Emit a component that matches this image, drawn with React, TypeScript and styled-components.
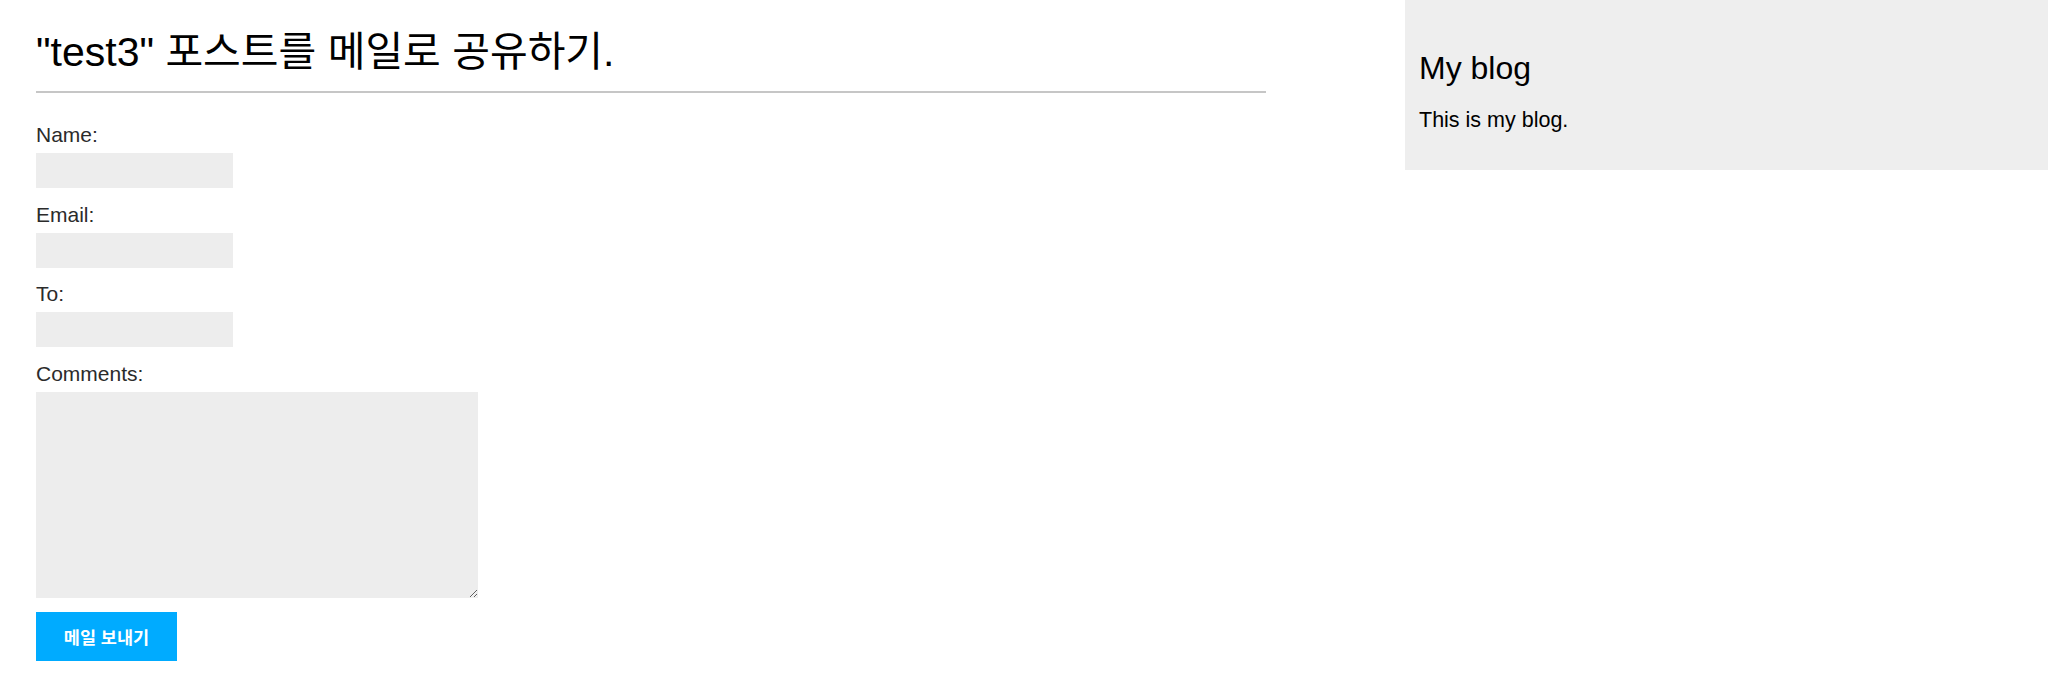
import styled, { createGlobalStyle } from "styled-components";

const GlobalStyle = createGlobalStyle`
  body {
    margin: 0;
    padding: 0;
    background: #fff;
    font-family: "Liberation Sans", "Noto Sans CJK KR", Helvetica, sans-serif;
  }
`;

const Page = styled.div`
  display: flex;
  justify-content: space-between;
  align-items: flex-start;
  width: 2048px;
`;

const Content = styled.main`
  width: 1230px;
  padding-left: 36px;
`;

const Title = styled.h1`
  margin: 27px 0 28px;
  padding-bottom: 14px;
  border-bottom: 2px solid #c6c6c6;
  font-size: 41px;
  line-height: 50px;
  font-weight: normal;
  color: #000;
`;

const Form = styled.form`
  display: flex;
  flex-direction: column;
  align-items: flex-start;
`;

const Label = styled.label`
  margin-bottom: 5px;
  font-size: 21px;
  line-height: 27px;
  color: #2b2b2b;
`;

const Input = styled.input`
  box-sizing: border-box;
  width: 197px;
  height: 35px;
  margin: 0 0 12.5px;
  padding: 7px 12px;
  border: 0;
  background: #ededed;
  font-size: 15px;
  outline: none;
`;

const TextArea = styled.textarea`
  box-sizing: border-box;
  width: 442px;
  height: 206px;
  margin: 0 0 14px;
  padding: 7px 12px;
  border: 0;
  background: #ededed;
  font-size: 15px;
  outline: none;
`;

const SubmitButton = styled.button`
  width: 141px;
  height: 49px;
  padding: 0;
  border: 0;
  background: #00abff;
  color: #fff;
  font-family: "Liberation Sans", "Noto Sans CJK KR", sans-serif;
  font-size: 17.5px;
  font-weight: bold;
  cursor: pointer;
`;

const Sidebar = styled.aside`
  box-sizing: border-box;
  width: 643px;
  height: 170px;
  padding: 12.5px 14px;
  background: #eeeeee;
  color: #000;
`;

const SideTitle = styled.h2`
  margin: 37.5px 0 0;
  font-size: 32px;
  font-weight: normal;
  line-height: 37px;
`;

const SideText = styled.p`
  margin: 21px 0;
  font-size: 21.5px;
  line-height: 25px;
`;

const fields = [
  { id: "name", label: "Name:" },
  { id: "email", label: "Email:" },
  { id: "to", label: "To:" },
];

export default function App() {
  return (
    <>
      <GlobalStyle />
      <Page>
        <Content>
          <Title>"test3" 포스트를 메일로 공유하기.</Title>
          <Form onSubmit={(e) => e.preventDefault()}>
            {fields.map((f) => (
              <>
                <Label key={f.id + "-l"} htmlFor={f.id}>
                  {f.label}
                </Label>
                <Input key={f.id} id={f.id} type="text" />
              </>
            ))}
            <Label htmlFor="comments">Comments:</Label>
            <TextArea id="comments" />
            <SubmitButton type="submit">메일 보내기</SubmitButton>
          </Form>
        </Content>
        <Sidebar>
          <SideTitle>My blog</SideTitle>
          <SideText>This is my blog.</SideText>
        </Sidebar>
      </Page>
    </>
  );
}
